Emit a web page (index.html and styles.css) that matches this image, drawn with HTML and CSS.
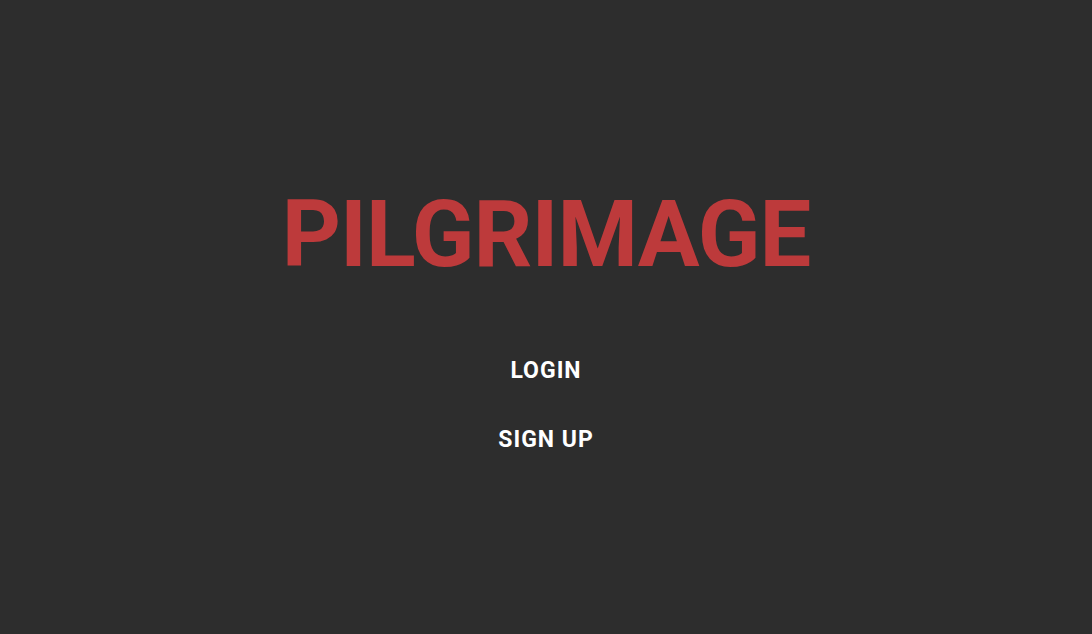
FILE: index.html
```html
<!DOCTYPE html>
<html lang="en">
<head>
<meta charset="utf-8">
<title>Pilgrimage</title>
<link rel="stylesheet" href="styles.css">
</head>
<body>
<main class="landing">
  <h1 class="title">PILGRIMAGE</h1>
  <nav class="actions">
    <button class="action">LOGIN</button>
    <button class="action">SIGN UP</button>
  </nav>
</main>
</body>
</html>
```

FILE: styles.css
```css
html, body {
  margin: 0;
  padding: 0;
  height: 100%;
}
body {
  background: #2d2d2d;
  font-family: Roboto, "Liberation Sans", sans-serif;
}
.landing {
  box-sizing: border-box;
  height: 100vh;
  padding-top: 5px;
  display: flex;
  flex-direction: column;
  align-items: center;
  justify-content: center;
}
.title {
  margin: 0 0 78px;
  font-size: 92px;
  line-height: 92px;
  font-weight: 700;
  color: #bd3a3b;
  letter-spacing: -1px;
}
.actions {
  display: flex;
  flex-direction: column;
  align-items: center;
  gap: 46px;
}
.action {
  background: none;
  border: 0;
  padding: 0;
  margin: 0;
  font-family: inherit;
  font-size: 23px;
  line-height: 23px;
  font-weight: 700;
  letter-spacing: 1px;
  color: #ffffff;
  cursor: pointer;
}
```
